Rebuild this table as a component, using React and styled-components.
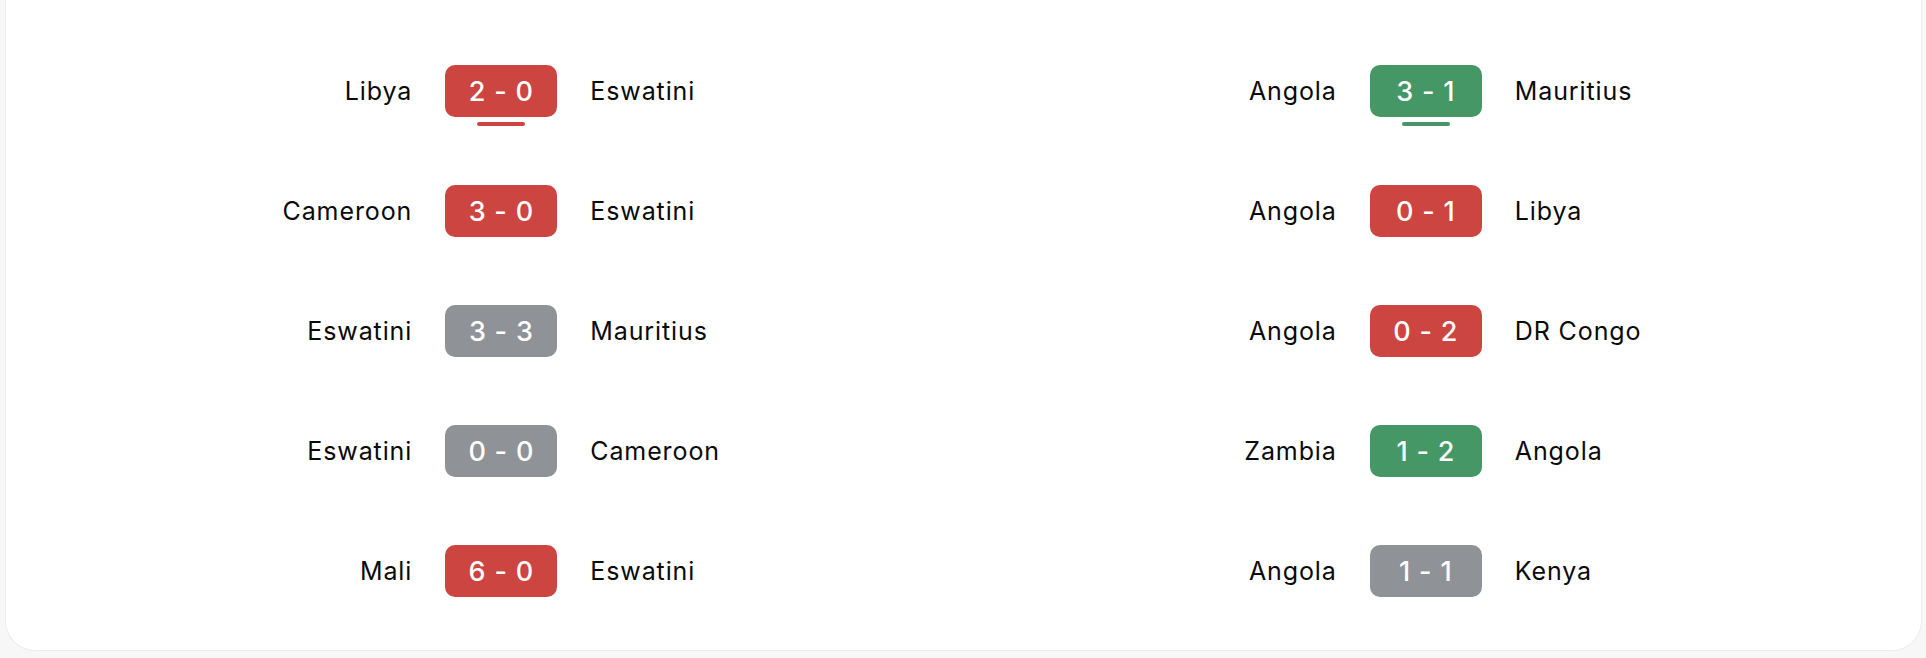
import styled, { createGlobalStyle } from 'styled-components';

const GlobalStyle = createGlobalStyle`
  html, body {
    margin: 0;
    padding: 0;
    background: #f7f7f7;
  }
  body {
    font-family: Inter, "Noto Sans", sans-serif;
    color: #0a0a0a;
  }
`;

const Page = styled.div`
  padding: 0 4px 6px 5px;
`;

const Card = styled.div`
  background: #fff;
  border: 1px solid #ececec;
  border-top: none;
  border-radius: 0 0 30px 30px;
  padding: 65px 33px 53px;
  display: grid;
  grid-template-columns: 1fr 1fr;
`;

const Column = styled.div`
  display: flex;
  flex-direction: column;
  gap: 68px;
`;

const Row = styled.div`
  display: grid;
  grid-template-columns: 1fr 112px 1fr;
  align-items: center;
  column-gap: 33px;
  height: 52px;
`;

const Team = styled.span`
  font-size: 25px;
  font-weight: 400;
  letter-spacing: 0.9px;
  text-align: ${(p) => (p.$home ? 'right' : 'left')};
  white-space: nowrap;
`;

const colors = {
  loss: '#cc4541',
  win: '#459766',
  draw: '#8f9397',
};

const Score = styled.div`
  position: relative;
  height: 52px;
  border-radius: 10px;
  background: ${(p) => colors[p.$result]};
  color: #fff;
  font-size: 27px;
  font-weight: 500;
  display: flex;
  align-items: center;
  justify-content: center;
  letter-spacing: 0.8px;
`;

const Marker = styled.span`
  position: absolute;
  left: 32px;
  right: 32px;
  bottom: -9px;
  height: 4px;
  border-radius: 2px;
  background: ${(p) => colors[p.$result]};
`;

const left = [
  { home: 'Libya', away: 'Eswatini', score: '2 - 0', result: 'loss', active: true },
  { home: 'Cameroon', away: 'Eswatini', score: '3 - 0', result: 'loss' },
  { home: 'Eswatini', away: 'Mauritius', score: '3 - 3', result: 'draw' },
  { home: 'Eswatini', away: 'Cameroon', score: '0 - 0', result: 'draw' },
  { home: 'Mali', away: 'Eswatini', score: '6 - 0', result: 'loss' },
];

const right = [
  { home: 'Angola', away: 'Mauritius', score: '3 - 1', result: 'win', active: true },
  { home: 'Angola', away: 'Libya', score: '0 - 1', result: 'loss' },
  { home: 'Angola', away: 'DR Congo', score: '0 - 2', result: 'loss' },
  { home: 'Zambia', away: 'Angola', score: '1 - 2', result: 'win' },
  { home: 'Angola', away: 'Kenya', score: '1 - 1', result: 'draw' },
];

function MatchRow({ match }) {
  return (
    <Row>
      <Team $home>{match.home}</Team>
      <Score $result={match.result}>
        {match.score}
        {match.active && <Marker $result={match.result} />}
      </Score>
      <Team>{match.away}</Team>
    </Row>
  );
}

export default function App() {
  return (
    <>
      <GlobalStyle />
      <Page>
        <Card>
          <Column>
            {left.map((m) => <MatchRow key={m.home + m.away} match={m} />)}
          </Column>
          <Column>
            {right.map((m) => <MatchRow key={m.home + m.away} match={m} />)}
          </Column>
        </Card>
      </Page>
    </>
  );
}
